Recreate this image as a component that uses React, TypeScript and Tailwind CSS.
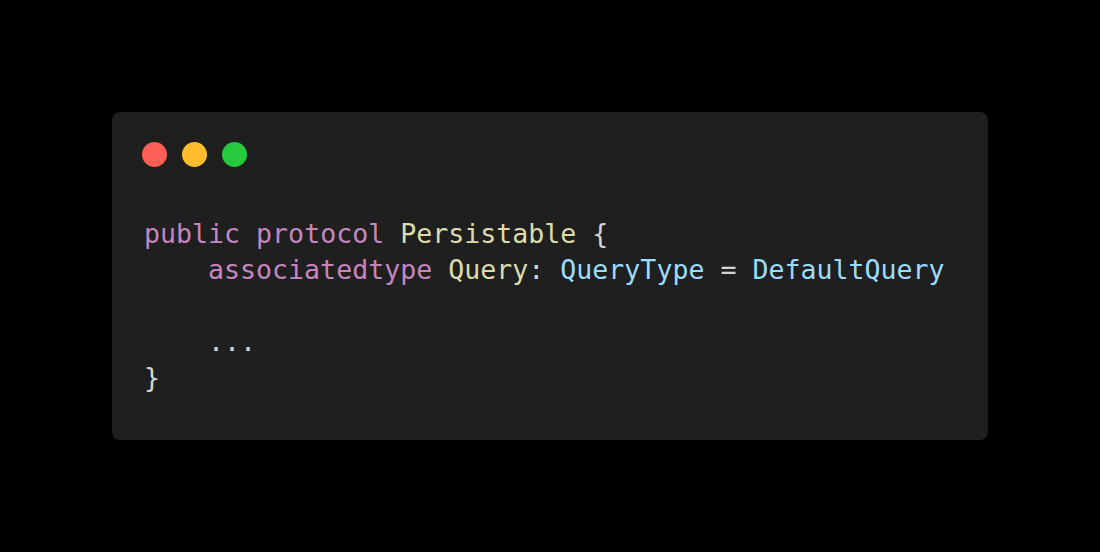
const mono = { fontFamily: '"DejaVu Sans Mono", "Liberation Mono", monospace' }

export default function App() {
    return (
        <div className="w-[1100px] h-[552px] bg-black pt-[112px] px-[112px]">
            <div className="w-[876px] h-[328px] rounded-lg bg-[#1f1f1f] pt-[30px] pl-[30px]">
                <div className="flex gap-[15px]">
                    <span className="w-[25px] h-[25px] rounded-full bg-[#ff5f56]" />
                    <span className="w-[25px] h-[25px] rounded-full bg-[#ffbd2e]" />
                    <span className="w-[25px] h-[25px] rounded-full bg-[#27c93f]" />
                </div>
                <pre className="mt-[49px] pl-[2px] text-[26.6px] leading-[36px] text-[#d4d4d4]" style={mono}>
                    <span className="text-[#c586c0]">public</span>{" "}
                    <span className="text-[#c586c0]">protocol</span>{" "}
                    <span className="text-[#dcdcaa]">Persistable</span>
                    {" {\n    "}
                    <span className="text-[#c586c0]">associatedtype</span>{" "}
                    <span className="text-[#dcdcaa]">Query</span>
                    {": "}
                    <span className="text-[#9cdcfe]">QueryType</span>
                    {" = "}
                    <span className="text-[#9cdcfe]">DefaultQuery</span>
                    {"\n\n    ...\n}"}
                </pre>
            </div>
        </div>
    )
}
